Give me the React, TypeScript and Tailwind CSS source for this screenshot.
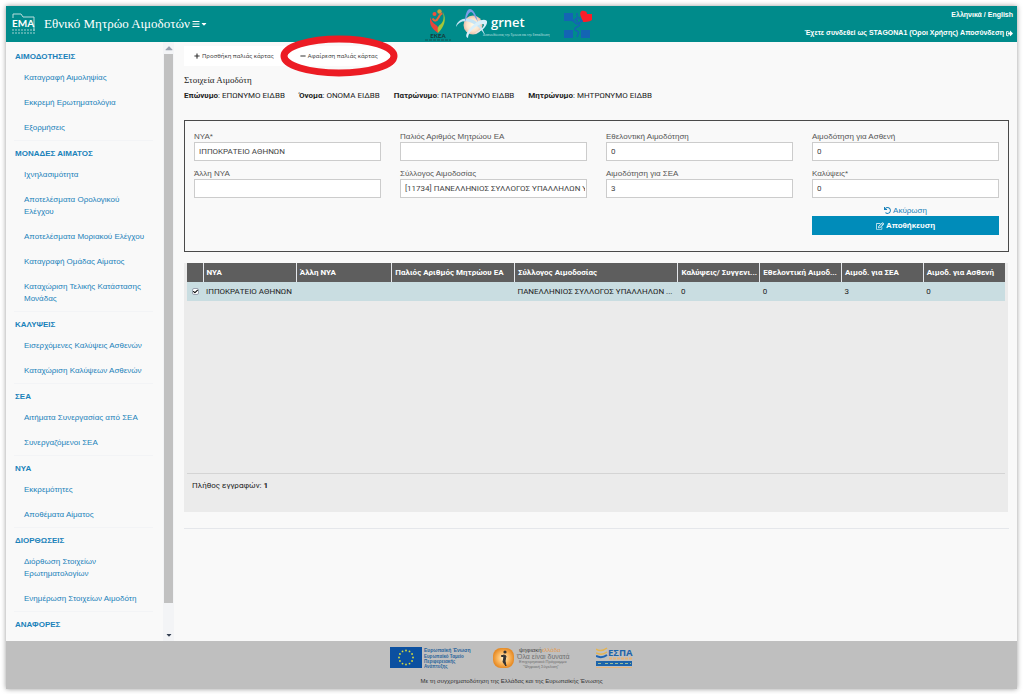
import React, { useState } from 'react'
import {
  FaBars,
  FaCaretDown,
  FaCaretUp,
  FaCheck,
  FaMinus,
  FaPlus,
  FaRegEdit,
  FaSignOutAlt,
  FaUndo
} from 'react-icons/fa'

interface MenuSection {
  title: string
  items: string[]
}

const menu: MenuSection[] = [
  { title: 'ΑΙΜΟΔΟΤΗΣΕΙΣ', items: ['Καταγραφή Αιμοληψίας', 'Εκκρεμή Ερωτηματολόγια', 'Εξορμήσεις'] },
  {
    title: 'ΜΟΝΑΔΕΣ ΑΙΜΑΤΟΣ',
    items: [
      'Ιχνηλασιμότητα',
      'Αποτελέσματα Ορολογικού Ελέγχου',
      'Αποτελέσματα Μοριακού Ελέγχου',
      'Καταγραφή Ομάδας Αίματος',
      'Καταχώριση Τελικής Κατάστασης Μονάδας'
    ]
  },
  { title: 'ΚΑΛΥΨΕΙΣ', items: ['Εισερχόμενες Καλύψεις Ασθενών', 'Καταχώριση Καλύψεων Ασθενών'] },
  { title: 'ΣΕΑ', items: ['Αιτήματα Συνεργασίας από ΣΕΑ', 'Συνεργαζόμενοι ΣΕΑ'] },
  { title: 'ΝΥΑ', items: ['Εκκρεμότητες', 'Αποθέματα Αίματος'] },
  { title: 'ΔΙΟΡΘΩΣΕΙΣ', items: ['Διόρθωση Στοιχείων Ερωτηματολογίων', 'Ενημέρωση Στοιχείων Αιμοδότη'] },
  { title: 'ΑΝΑΦΟΡΕΣ', items: [] }
]

const donor = [
  { label: 'Επώνυμο', value: 'ΕΠΩΝΥΜΟ ΕΙΔΒΒ' },
  { label: 'Όνομα', value: 'ΟΝΟΜΑ ΕΙΔΒΒ' },
  { label: 'Πατρώνυμο', value: 'ΠΑΤΡΩΝΥΜΟ ΕΙΔΒΒ' },
  { label: 'Μητρώνυμο', value: 'ΜΗΤΡΩΝΥΜΟ ΕΙΔΒΒ' }
]

const fields = [
  { id: 'nya', label: 'ΝΥΑ*', value: 'ΙΠΠΟΚΡΑΤΕΙΟ ΑΘΗΝΩΝ' },
  { id: 'oldNumber', label: 'Παλιός Αριθμός Μητρώου ΕΑ', value: '' },
  { id: 'voluntary', label: 'Εθελοντική Αιμοδότηση', value: '0' },
  { id: 'patient', label: 'Αιμοδότηση για Ασθενή', value: '0' },
  { id: 'otherNya', label: 'Άλλη ΝΥΑ', value: '' },
  { id: 'club', label: 'Σύλλογος Αιμοδοσίας', value: '[11734] ΠΑΝΕΛΛΗΝΙΟΣ ΣΥΛΛΟΓΟΣ ΥΠΑΛΛΗΛΩΝ Υ' },
  { id: 'sea', label: 'Αιμοδότηση για ΣΕΑ', value: '3' },
  { id: 'coverage', label: 'Καλύψεις*', value: '0' }
]

const columns = [
  { title: 'ΝΥΑ', width: 'w-[11.4%]', value: 'ΙΠΠΟΚΡΑΤΕΙΟ ΑΘΗΝΩΝ' },
  { title: 'Άλλη ΝΥΑ', width: 'w-[11.7%]', value: '' },
  { title: 'Παλιός Αριθμός Μητρώου ΕΑ', width: 'w-[15%]', value: '' },
  { title: 'Σύλλογος Αιμοδοσίας', width: 'w-[20%]', value: 'ΠΑΝΕΛΛΗΝΙΟΣ ΣΥΛΛΟΓΟΣ ΥΠΑΛΛΗΛΩΝ ...' },
  { title: 'Καλύψεις/ Συγγενι...', width: 'w-[10%]', value: '0' },
  { title: 'Εθελοντική Αιμοδ...', width: 'w-[10%]', value: '0' },
  { title: 'Αιμοδ. για ΣΕΑ', width: 'w-[10%]', value: '3' },
  { title: 'Αιμοδ. για Ασθενή', width: 'w-[10%]', value: '0' }
]

const EmaLogo: React.FC = () => (
  <svg width="24" height="22" viewBox="0 0 24 22" fill="none" role="img" aria-label="EMA">
    <path d="M1 5V1h8l2 3h11v14" stroke="#b9dcdc" strokeWidth="1" />
    <text x="0" y="14" fill="#fff" fontFamily="Lato, sans-serif" fontWeight="700" fontSize="10">EMA</text>
    <path d="M0 17h23M0 20h23" stroke="#9fd0d0" strokeWidth="1" strokeDasharray="2 1" />
  </svg>
)

const EkeaLogo: React.FC = () => (
  <svg width="28" height="34" viewBox="0 0 28 34" role="img" aria-label="ΕΚΕΑ">
    <circle cx="10.500" cy="7" r="2" fill="#f0503c" />
    <circle cx="15.500" cy="4.500" r="2.2" fill="#c8a03c" />
    <path d="M6.500 10c-2 8 2 12 7.500 16 0-4 1-6-2-8-3-2-5-4-5.500-8z" fill="#e8443a" />
    <path d="M19 5c4 8 1 15-5 21-1-5 0-7 3-9 3-3 3-7 2-12z" fill="#a4c639" />
    <path d="M8.500 11.500c2 3 4 3 6-1s3-4 4-4" stroke="#e8643a" strokeWidth="2" fill="none" />
    <text x="14" y="31" textAnchor="middle" fill="#143c3c" fontFamily="Lato, sans-serif" fontWeight="900" fontSize="6">ΕΚΕΑ</text>
    <path d="M1 33h26" stroke="#0d5555" strokeWidth="1" strokeDasharray="3 1" />
  </svg>
)

const GrnetLogo: React.FC = () => (
  <svg width="100" height="34" viewBox="0 0 100 34" role="img" aria-label="grnet">
    <defs>
      <radialGradient id="grnetGlow">
        <stop offset="0" stopColor="#fffbe8" />
        <stop offset="0.65" stopColor="#fbe3cc" />
        <stop offset="1" stopColor="#e8bda8" />
      </radialGradient>
    </defs>
    <circle cx="17" cy="18" r="9.500" fill="url(#grnetGlow)" />
    <path d="M0 20c1-8 11-11 19-6 5 3 8 8 10 14-4-6-8-10-13-12C9 13 3 14 0 20z" fill="#c5e4f5" />
    <path d="M12 31c-5-2 2-11 9-16 5-3 11-3 10 1-1 5-7 9-13 11 5-3 10-7 10-9s-4-1-7 1c-6 4-9 8-9 12z" fill="#d9effa" />
    <path d="M9 15c0-7 2-13 5-13s6 5 8 13c-4-6-5-10-7-10s-4 4-6 10z" fill="#7c9ce6" />
    <text x="35" y="20" fill="#fff" fontFamily="Open Sans, sans-serif" fontWeight="600" fontSize="13">grnet</text>
    <text x="27" y="29" fill="#c3e2e2" fontFamily="Open Sans, sans-serif" fontSize="3">Διασυνδέοντας την Έρευνα και την Εκπαίδευση</text>
  </svg>
)

const HealthLogo: React.FC = () => (
  <svg width="30" height="30" viewBox="0 0 30 30" role="img" aria-label="Υπουργείο Υγείας">
    <path d="M0 4h9v8H0zM0 21h9v8H0zM17 21h9v8h-9z" fill="#1464b4" />
    <path d="M17 8c-2-4 0-7 3-6 2 0 3 1 3 3h5v6c-3 2-7 2-9 2z" fill="#fa1e28" />
    <path d="M9 12l5-4 4 4-5 3zM13 4v3m0 7c4 0 3 3 0 4s-3 3 0 4 1 3 0 6M13 8v5" stroke="#1464b4" strokeWidth="1.500" fill="none" />
  </svg>
)

const EuLogo: React.FC = () => (
  <svg width="83" height="22" viewBox="0 0 83 22" role="img" aria-label="Ευρωπαϊκή Ένωση">
    <rect width="32" height="21" fill="#0b50a0" />
    {Array.from({ length: 12 }, (_, i) => (
      <circle
        key={i}
        cx={16 + 7 * Math.sin((i * Math.PI) / 6)}
        cy={10.5 - 7 * Math.cos((i * Math.PI) / 6)}
        r="0.9"
        fill="#d7dc3c"
      />
    ))}
    <g fill="#28649b" fontFamily="Liberation Sans, sans-serif" fontWeight="700">
      <text x="34" y="4.600" fontSize="5">Ευρωπαϊκή Ένωση</text>
      <text x="34" y="10.500" fontSize="4.500">Ευρωπαϊκό Ταμείο</text>
      <text x="34" y="15.700" fontSize="4.500">Περιφερειακής</text>
      <text x="34" y="20.900" fontSize="4.500">Ανάπτυξης</text>
    </g>
  </svg>
)

const DigitalLogo: React.FC = () => (
  <svg width="83" height="22" viewBox="0 0 83 22" role="img" aria-label="Ψηφιακή Ελλάδα">
    <defs>
      <radialGradient id="digitalOrb">
        <stop offset="0" stopColor="#fff0c8" />
        <stop offset="0.6" stopColor="#fab45a" />
        <stop offset="1" stopColor="#e68c28" />
      </radialGradient>
    </defs>
    <rect y="1" width="21" height="20" rx="8" fill="url(#digitalOrb)" />
    <circle cx="12" cy="5" r="1.600" fill="#323232" />
    <path d="M8 9l3-1 2 1-1 5 1 5-3-4 1-5z" fill="#323232" stroke="#323232" strokeWidth="1" />
    <g fontFamily="Liberation Sans, sans-serif" fill="#6e6e6e">
      <text x="26" y="4.500" fontSize="6" fill="#404040">ψηφιακή<tspan fill="#e39a50">ελλάδα</tspan></text>
      <text x="24" y="11.500" fontSize="7">Όλα είναι δυνατά</text>
      <text x="26" y="16.400" fontSize="4">Επιχειρησιακό Πρόγραμμα</text>
      <text x="30" y="21" fontSize="4">"Ψηφιακή Σύγκλιση"</text>
    </g>
  </svg>
)

const EspaLogo: React.FC = () => (
  <svg width="37" height="22" viewBox="0 0 37 22" role="img" aria-label="ΕΣΠΑ">
    <path d="M0 2c4 3 7 2 11-1M0 6c4 2 7 2 11-1" stroke="#e6b450" strokeWidth="1.500" fill="none" />
    <path d="M0 9c4 2 7 2 11-1" stroke="#1e64b4" strokeWidth="2" fill="none" />
    <text x="12" y="8.500" fill="#1e64aa" fontFamily="Open Sans, sans-serif" fontWeight="700" fontSize="9.500">ΕΣΠΑ</text>
    <path d="M13 11.500h23" stroke="#e6b478" strokeWidth="2" strokeDasharray="3 1" />
    <rect y="14" width="36" height="5" fill="#1e64aa" />
    <path d="M2 16.500h5M9 16.500h26" stroke="#a0be96" strokeWidth="1" strokeDasharray="3 2" />
    <path d="M0 20.500h36" stroke="#e6b478" strokeWidth="1" />
  </svg>
)

const Header: React.FC = () => (
  <header className="flex h-9 shrink-0 bg-[#008b8b] text-white">
    <div className="flex flex-1 items-center gap-2 pl-1.5">
      <EmaLogo />
      <h1 className="font-['Liberation_Serif',serif] text-[13px] whitespace-nowrap">Εθνικό Μητρώο Αιμοδοτών</h1>
      <button aria-label="Μενού" className="-ml-1.5 flex items-center text-[8px]">
        <FaBars />
        <FaCaretDown />
      </button>
    </div>
    <div className="flex items-center gap-1 pr-2">
      <EkeaLogo />
      <GrnetLogo />
      <span className="pl-1"><HealthLogo /></span>
    </div>
    <div className="flex flex-1 flex-col items-end justify-between py-[3px] pr-1 text-[7px] leading-3 font-bold whitespace-nowrap">
      <p><a href="#el">Ελληνικά</a> / <a href="#en">English</a></p>
      <p className="flex items-center gap-0.5">
        <span>Έχετε συνδεθεί ως STAGONA1 (<a href="#terms">Όροι Χρήσης</a>) <a href="#logout">Αποσύνδεση</a></span>
        <FaSignOutAlt />
      </p>
    </div>
  </header>
)

const Sidebar: React.FC = () => (
  <aside className="flex w-42 shrink-0 text-[8px] leading-3 text-[#1a82ba]">
    <nav className="flex-1 pt-[9px] pr-2.5 pl-2">
      {menu.map((section) => (
        <section key={section.title} className="mb-[7px] border-b border-gray-100 pb-1.5 last:mb-0 last:border-0 last:pb-0">
          <h2 className="pl-px font-bold">{section.title}</h2>
          <ul className="flex flex-col gap-[13px] pt-[9px] pl-2.5">
            {section.items.map((item) => (
              <li key={item}><a href="#menu" className="block max-w-[124px]">{item}</a></li>
            ))}
          </ul>
        </section>
      ))}
    </nav>
    <div aria-hidden="true" className="flex w-[11px] flex-col items-center bg-gray-100">
      <FaCaretUp className="h-3 w-2 text-gray-400" />
      <div className="w-[9px] flex-1 bg-[#c1c1c1]" />
      <div className="flex h-[38px] items-end pb-0.5">
        <FaCaretDown className="h-2 w-2 text-gray-700" />
      </div>
    </div>
  </aside>
)

const CardForm: React.FC = () => {
  const [values, setValues] = useState<Record<string, string>>(
    Object.fromEntries(fields.map((field) => [field.id, field.value]))
  )

  return (
    <form
      onSubmit={(e) => e.preventDefault()}
      className="mt-[18px] grid grid-cols-4 gap-x-[19px] gap-y-[7px] border border-[#4a4a4a] px-[9px] pt-2.5 pb-4"
    >
      {fields.map((field) => (
        <div key={field.id}>
          <label htmlFor={field.id} className="block leading-[11px] text-[#555]">{field.label}</label>
          <input
            id={field.id}
            type="text"
            value={values[field.id]}
            onChange={(e) => setValues({ ...values, [field.id]: e.target.value })}
            className="block h-[19px] w-full border border-[#ccc] bg-white pr-px pl-1 font-['Roboto',sans-serif] text-[#444]"
          />
        </div>
      ))}
      <div className="col-start-4 flex flex-col">
        <button type="button" className="flex items-center justify-center gap-0.5 leading-[11px] text-[#1a82ba]">
          <FaUndo className="h-[7px] w-[7px]" /> Ακύρωση
        </button>
        <button type="submit" className="flex h-[19px] items-center justify-center gap-0.5 bg-[#008cba] font-bold text-white">
          <FaRegEdit /> Αποθήκευση
        </button>
      </div>
    </form>
  )
}

const CardsTable: React.FC = () => {
  const [selected, setSelected] = useState<boolean>(true)

  return (
    <div className="mt-[11px] mr-px bg-[#ebebeb] px-[3px] font-['Roboto',sans-serif]">
      <div className="h-[211px] border-b border-[#d4d4d4]">
        <table className="w-full table-fixed text-left whitespace-nowrap">
          <thead>
            <tr className="h-[19px] bg-[#5e5e5e] text-white">
              <th className="w-4"></th>
              {columns.map((column) => (
                <th key={column.title} className={`${column.width} border-l border-gray-200 pl-[3px] font-bold`}>
                  {column.title}
                </th>
              ))}
            </tr>
          </thead>
          <tbody>
            <tr className="h-[19px] bg-[#c9dde1] text-[#222]">
              <td>
                <label className="relative mx-auto block h-[7px] w-[7px]">
                  <input
                    type="checkbox"
                    aria-label="Επιλογή εγγραφής"
                    checked={selected}
                    onChange={() => setSelected(!selected)}
                    className="block h-[7px] w-[7px] appearance-none rounded-xs border border-gray-400 bg-white"
                  />
                  {selected && <FaCheck className="pointer-events-none absolute top-px left-px h-[5px] w-[5px] text-black" />}
                </label>
              </td>
              {columns.map((column) => (
                <td key={column.title} className="pl-[3px]">{column.value}</td>
              ))}
            </tr>
          </tbody>
        </table>
      </div>
      <p className="px-[5px] pt-1.5 pb-5 leading-3 text-[#222]">Πλήθος εγγραφών: <b>1</b></p>
    </div>
  )
}

const App: React.FC = () => {
  return (
    <div className="flex min-h-screen bg-white p-1.5 pb-[5px] font-['Liberation_Sans',sans-serif]">
      <div className="flex min-w-0 flex-1 flex-col bg-[#f9f9f9] shadow-[0_0_5px_rgba(0,0,0,0.4)]">
        <Header />
        <div className="flex flex-1">
          <Sidebar />
          <main className="min-w-0 flex-1 pt-1 pr-2 pl-2.5 text-[8px] text-[#222]">
            <div className="flex font-['Open_Sans',sans-serif] text-[6px] text-[#333]">
              <button className="flex h-5 items-center gap-0.5 bg-white px-2.5">
                <FaPlus /> Προσθήκη παλιάς κάρτας
              </button>
              <div className="relative">
                <button className="flex h-5 items-center gap-0.5 bg-white px-4">
                  <FaMinus /> Αφαίρεση παλιάς κάρτας
                </button>
                {/* highlight ring */}
                <svg
                  className="pointer-events-none absolute top-1/2 left-1/2 -translate-x-1/2 -translate-y-1/2"
                  width="118"
                  height="42"
                  viewBox="0 0 118 42"
                  fill="none"
                >
                  <ellipse cx="59" cy="21" rx="55" ry="17" stroke="#ec1c24" strokeWidth="7" />
                </svg>
              </div>
            </div>
            <h2 className="mt-2 font-['Liberation_Serif',serif] text-[9px] leading-3">Στοιχεία Αιμοδότη</h2>
            <dl className="mt-1 flex gap-3.5 font-['Roboto',sans-serif] leading-3">
              {donor.map((item) => (
                <div key={item.label} className="flex gap-0.5">
                  <dt><b>{item.label}</b>:</dt>
                  <dd>{item.value}</dd>
                </div>
              ))}
            </dl>
            <CardForm />
            <CardsTable />
            <hr className="mt-4 border-gray-200" />
          </main>
        </div>
        <footer className="flex h-12 shrink-0 flex-col items-center justify-between bg-[#bfbfbf] pt-1.5 pb-1">
          <div className="flex items-center gap-5">
            <EuLogo />
            <DigitalLogo />
            <EspaLogo />
          </div>
          <p className="text-[6px] leading-2 text-[#333]">
            Με τη συγχρηματοδότηση της Ελλάδας και της Ευρωπαϊκής Ένωσης
          </p>
        </footer>
      </div>
    </div>
  )
}

export default App
